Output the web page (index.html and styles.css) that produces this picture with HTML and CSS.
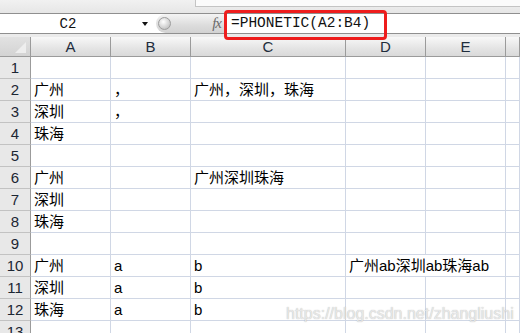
FILE: index.html
```html
<!DOCTYPE html>
<html lang="zh-CN">
<head>
    <meta charset="UTF-8">
    <title>PHONETIC</title>
    <link rel="stylesheet" href="styles.css">
</head>
<body>
    <div class="top-strip">
        <div class="strip-gap"></div>
        <div class="strip-box"></div>
    </div>

    <div class="formula-bar">
        <div class="name-box">
            <span class="cell-ref">C2</span>
            <span class="drop-arrow"></span>
        </div>
        <div class="fx-pill">
            <span class="knob"></span>
            <span class="fx">fx</span>
        </div>
        <div class="formula">=PHONETIC(A2:B4)</div>
    </div>
    <div class="callout"></div>

    <div class="sheet">
        <!-- column headers -->
        <div class="corner"><span class="select-all"></span></div>
        <div class="col-head">A</div>
        <div class="col-head">B</div>
        <div class="col-head">C</div>
        <div class="col-head">D</div>
        <div class="col-head">E</div>
        <div class="col-head"></div>

        <div class="row-head">1</div>
        <div class="cell"></div><div class="cell"></div><div class="cell"></div><div class="cell"></div><div class="cell"></div><div class="cell"></div>

        <div class="row-head">2</div>
        <div class="cell">广州</div><div class="cell">，</div><div class="cell">广州，深圳，珠海</div><div class="cell"></div><div class="cell"></div><div class="cell"></div>

        <div class="row-head">3</div>
        <div class="cell">深圳</div><div class="cell">，</div><div class="cell"></div><div class="cell"></div><div class="cell"></div><div class="cell"></div>

        <div class="row-head">4</div>
        <div class="cell">珠海</div><div class="cell"></div><div class="cell"></div><div class="cell"></div><div class="cell"></div><div class="cell"></div>

        <div class="row-head">5</div>
        <div class="cell"></div><div class="cell"></div><div class="cell"></div><div class="cell"></div><div class="cell"></div><div class="cell"></div>

        <div class="row-head">6</div>
        <div class="cell">广州</div><div class="cell"></div><div class="cell">广州深圳珠海</div><div class="cell"></div><div class="cell"></div><div class="cell"></div>

        <div class="row-head">7</div>
        <div class="cell">深圳</div><div class="cell"></div><div class="cell"></div><div class="cell"></div><div class="cell"></div><div class="cell"></div>

        <div class="row-head">8</div>
        <div class="cell">珠海</div><div class="cell"></div><div class="cell"></div><div class="cell"></div><div class="cell"></div><div class="cell"></div>

        <div class="row-head">9</div>
        <div class="cell"></div><div class="cell"></div><div class="cell"></div><div class="cell"></div><div class="cell"></div><div class="cell"></div>

        <div class="row-head">10</div>
        <div class="cell">广州</div><div class="cell">a</div><div class="cell">b</div><div class="cell span-2">广州ab深圳ab珠海ab</div><div class="cell"></div>

        <div class="row-head">11</div>
        <div class="cell">深圳</div><div class="cell">a</div><div class="cell">b</div><div class="cell"></div><div class="cell"></div><div class="cell"></div>

        <div class="row-head">12</div>
        <div class="cell">珠海</div><div class="cell">a</div><div class="cell">b</div><div class="cell"></div><div class="cell"></div><div class="cell"></div>

        <div class="row-head">13</div>
        <div class="cell"></div><div class="cell"></div><div class="cell"></div><div class="cell"></div><div class="cell"></div><div class="cell"></div>
    </div>

    <div class="watermark">https://blog.csdn.net/zhangliushi</div>
</body>
</html>
```

FILE: styles.css
```css
body {
    margin: 0;
    width: 520px;
    height: 333px;
    overflow: hidden;
    background-color: #ebebeb;
    font-family: 'Liberation Sans', 'Noto Sans CJK SC', sans-serif;
    position: relative;
}

/* strip above the formula bar */
.top-strip {
    display: flex;
    height: 13px;
    background: linear-gradient(#f1f1f1, #e6e6e6);
}

.strip-gap {
    width: 195px;
}

.strip-box {
    flex: 1;
    height: 6px;
    background-color: #fbfbfb;
    border-left: 1px solid #c4c4c4;
    border-bottom: 1px solid #c4c4c4;
}

/* formula bar */
.formula-bar {
    display: flex;
    height: 19px;
    background-color: white;
    border-top: 1px solid #8f8f8f;
    border-bottom: 1px solid #8f8f8f;
    margin-bottom: 3px;
}

.name-box {
    width: 156px;
    display: flex;
    align-items: center;
}

.cell-ref {
    width: 136px;
    text-align: center;
    font-family: 'Liberation Mono', monospace;
    font-size: 14px;
    color: #111;
}

.drop-arrow {
    margin-left: 6px;
    width: 0;
    height: 0;
    border-left: 3px solid transparent;
    border-right: 3px solid transparent;
    border-top: 4px solid #111;
}

.fx-pill {
    width: 69px;
    display: flex;
    align-items: center;
    justify-content: space-between;
    background: linear-gradient(#f4f4f4, #dcdcdc 60%, #d2d2d2);
    border-radius: 10px 0 0 10px;
    border-right: 1px solid #a8a8a8;
    padding: 0 3px 0 2px;
    box-sizing: border-box;
}

.knob {
    width: 11px;
    height: 11px;
    border-radius: 50%;
    background: radial-gradient(circle at 40% 35%, #ffffff, #c9c9c9 70%, #a9a9a9);
    border: 1px solid #9d9d9d;
}

.fx {
    font-family: 'Liberation Serif', serif;
    font-style: italic;
    font-size: 15px;
    color: #6b6b6b;
    letter-spacing: -1px;
}

.formula {
    flex: 1;
    padding-left: 6px;
    font-family: 'Liberation Mono', monospace;
    font-size: 14.5px;
    line-height: 19px;
    color: #111;
}

.callout {
    position: absolute;
    left: 224px;
    top: 10px;
    width: 163px;
    height: 30px;
    box-sizing: border-box;
    border: 3px solid #ee1d1d;
    border-radius: 4px;
}

/* sheet grid */
.sheet {
    display: grid;
    grid-template-columns: 31px 80px 80px 155px 80px 80px 1fr;
    grid-template-rows: 20px;
    grid-auto-rows: 22px;
    background-color: white;
}

.corner {
    position: relative;
    background: linear-gradient(#e2e2e2, #d3d3d3);
    border-right: 1px solid #9b9b9b;
    border-bottom: 1px solid #9b9b9b;
}

.select-all {
    position: absolute;
    right: 4px;
    bottom: 3px;
    width: 0;
    height: 0;
    border-left: 11px solid transparent;
    border-bottom: 11px solid #eeeeee;
}

.col-head {
    background: linear-gradient(#f8f8f8, #e4e4e4 60%, #d9d9d9);
    border-right: 1px solid #9b9b9b;
    border-bottom: 1px solid #9b9b9b;
    text-align: center;
    font-size: 15px;
    line-height: 20px;
    color: #1f2d3d;
}

.row-head {
    background-color: #e8e8e8;
    border-right: 1px solid #9b9b9b;
    border-bottom: 1px solid #c2c2c2;
    text-align: center;
    font-size: 15px;
    line-height: 22px;
    color: #1c2633;
}

.cell {
    border-right: 1px solid #d0d7e5;
    border-bottom: 1px solid #d0d7e5;
    padding-left: 3px;
    font-size: 15px;
    line-height: 22px;
    color: #000;
    white-space: nowrap;
    overflow: visible;
}

.span-2 {
    grid-column: span 2;
}

.watermark {
    position: absolute;
    left: 286px;
    top: 305px;
    font-family: 'Liberation Sans', sans-serif;
    font-size: 16px;
    color: rgba(240, 240, 240, 0.85);
    text-shadow: 0 0 1px rgba(120, 120, 120, 0.6);
}
```
